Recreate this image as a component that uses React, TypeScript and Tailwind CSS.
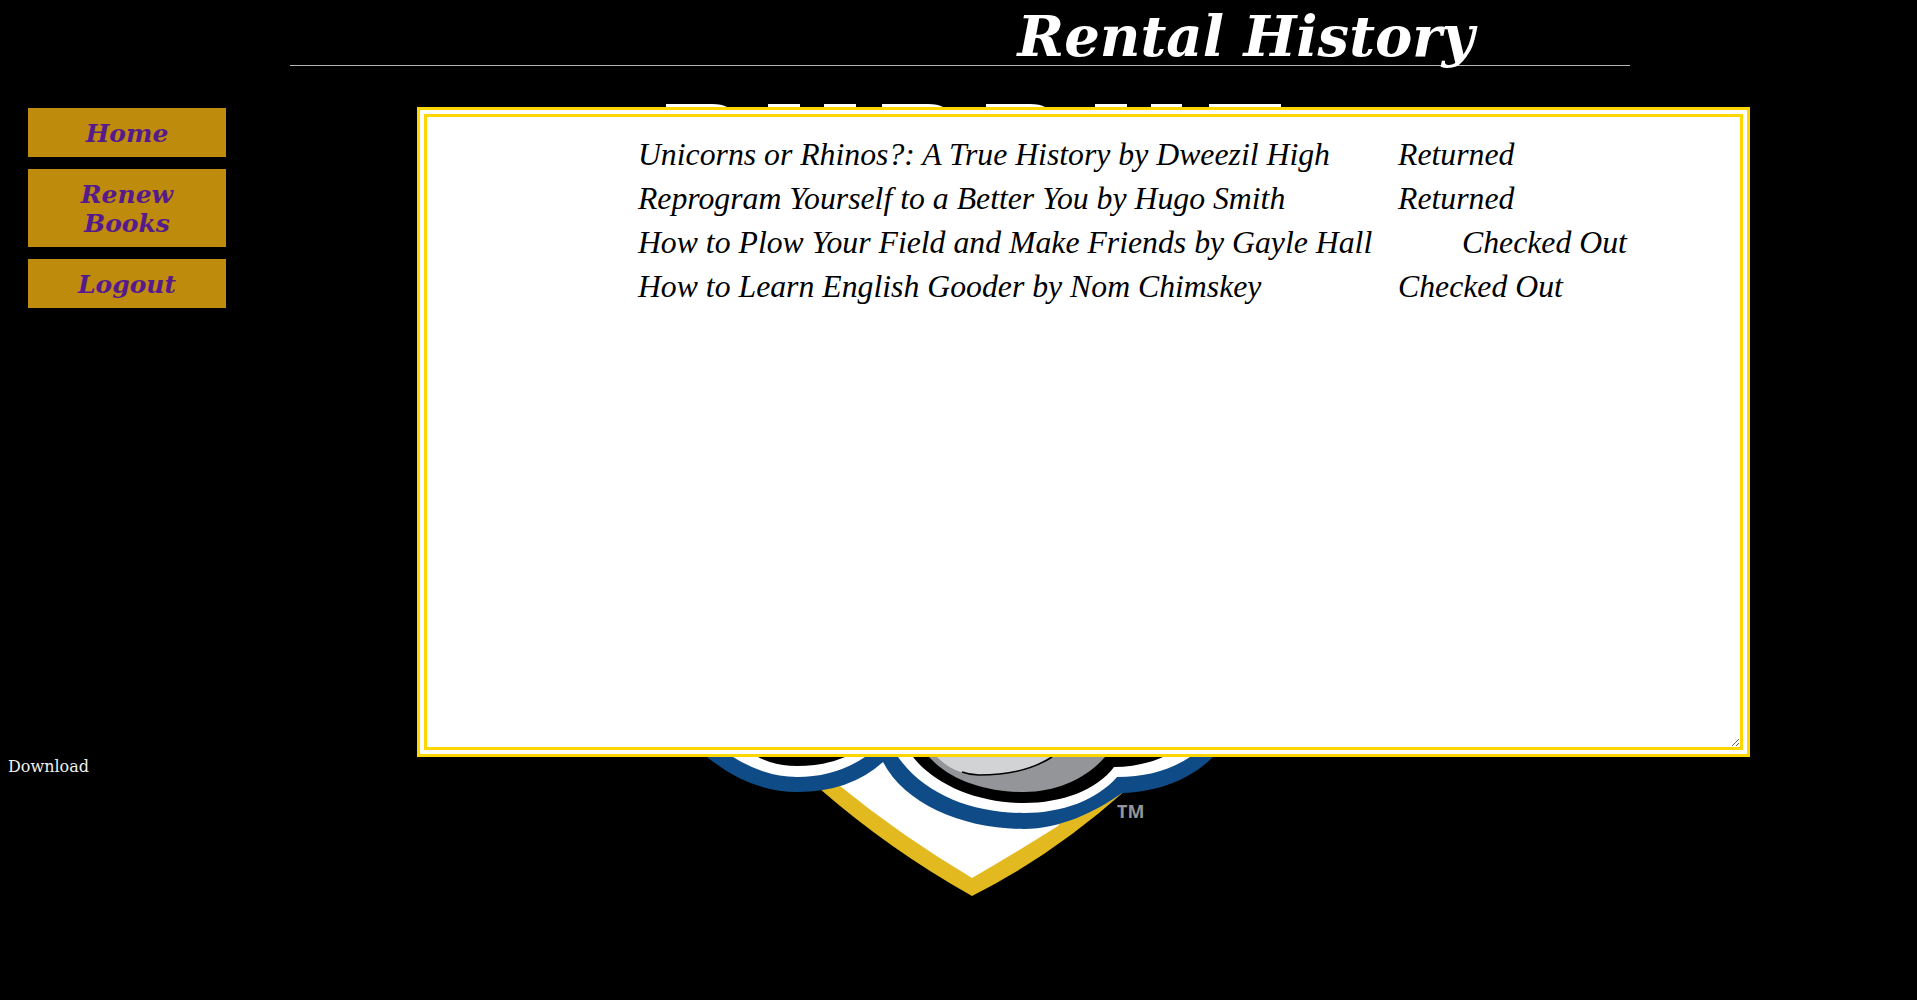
const history = [
  " Unicorns or Rhinos?: A True History by Dweezil High\t\tReturned",
  " Reprogram Yourself to a Better You by Hugo Smith\t\tReturned",
  " How to Plow Your Field and Make Friends by Gayle Hall\t\tChecked Out",
  " How to Learn English Gooder by Nom Chimskey\t\t\tChecked Out",
].join("\n");

function NavButton({ children }: { children: React.ReactNode }) {
  return (
    <a className="block bg-[#bf8b0c] px-[10px] pt-[11px] pb-[9px] text-center text-[25px] leading-[29px] font-bold text-[#551a8b] italic">
      {children}
    </a>
  );
}

function Logo() {
  return (
    <svg className="absolute top-0 left-0" width="1917" height="1000" viewBox="0 0 1917 1000">
      {/* wordmark tops */}
      <g fill="#ffffff">
        <path d="M666 104H712Q722 104 727 107V112H666Z" />
        <path d="M768 104H800V112H768Z" />
        <path d="M824 104H856V112H824Z" />
        <path d="M882 104H928Q938 104 943 107V112H882Z" />
        <path d="M986 104H1030Q1040 104 1045 107V112H986Z" />
        <path d="M1095 104H1127V112H1095Z" />
        <path d="M1151 104H1182V112H1151Z" />
        <path d="M1209 104H1281V112H1209Z" />
      </g>
      {/* shield */}
      <path d="M800 760L820 789Q890 850 972 896Q1052 856 1126 790L1130 760Z" fill="#e3b920" />
      <path d="M820 760L840 786Q900 835 972 878Q1020 850 1058 826L1100 760Z" fill="#ffffff" />
      {/* blue lobes */}
      <path
        d="M707 757Q750 792 797 792Q850 792 883 762C905 805 965 829 1024 829C1060 829 1095 812 1122 793C1157 792 1190 780 1213 757V700H707Z"
        fill="#0f4c87"
      />
      <path d="M733 757Q765 777 797 777Q835 777 865 757V700H733Z" fill="#ffffff" />
      <path d="M758 757Q775 766 797 766Q825 766 845 757V700H758Z" fill="#000000" />
      <path d="M898 757C925 795 973 813 1024 813C1062 813 1097 800 1117 777C1147 777 1170 770 1190 757V700H898Z" fill="#ffffff" />
      <path d="M913 757C935 785 978 803 1024 803C1062 803 1097 790 1114 767C1132 767 1150 763 1163 757V700H913Z" fill="#000000" />
      <path d="M929 757C952 782 988 792 1024 792C1057 792 1087 778 1105 757Z" fill="#939598" />
      <path d="M937 757C948 768 962 775 979 775C1007 775 1032 770 1052 757Z" fill="#d1d3d4" />
      <path d="M962 772Q970 775 979 775C1007 775 1032 770 1052 757" fill="none" stroke="#000000" strokeWidth="1.5" />
      <text x="1117" y="818" fontFamily="Noto Sans, sans-serif" fontWeight="700" fontSize="18" fill="#939598">
        TM
      </text>
    </svg>
  );
}

export default function App() {
  return (
    <div className="relative h-[1000px] overflow-hidden bg-black font-['DejaVu_Serif',serif] text-white">
      <Logo />
      <div className="relative">
        <h1 className="mr-[1px] ml-auto h-[65px] w-[1340px] text-center text-[56px] leading-[72px] font-bold italic">
          Rental History
        </h1>
        <div className="ml-[290px] h-px w-[1340px] bg-[#b4b4b4]" />
        <div className="mt-[41px] flex items-start">
          <div className="flex h-[669px] w-[417px] shrink-0 flex-col">
            <nav className="mt-px ml-[28px] flex w-[198px] flex-col gap-[12px]">
              <NavButton>Home</NavButton>
              <NavButton>Renew Books</NavButton>
              <NavButton>Logout</NavButton>
            </nav>
            <a className="mt-auto pl-[8px] text-base leading-[19px] text-[#f0f0f0]">Download</a>
          </div>
          <textarea
            readOnly
            value={history}
            className="h-[650px] w-[1333px] resize border-[10px] border-double border-[#ffd700] bg-white pt-[16px] pl-[203px] font-['Liberation_Serif',serif] text-[31.75px] leading-[44px] text-black italic outline-none [tab-size:64px]"
          />
        </div>
      </div>
    </div>
  );
}
